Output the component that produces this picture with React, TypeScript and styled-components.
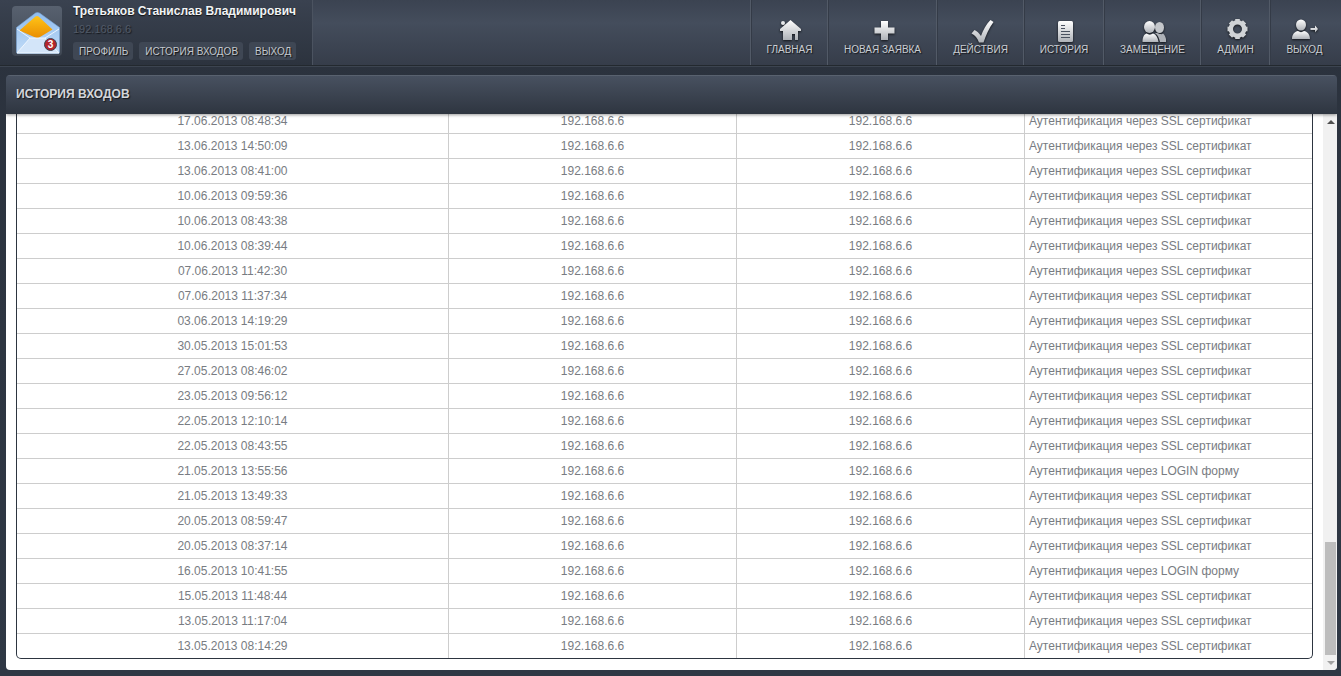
import React from "react";
import styled, { createGlobalStyle } from "styled-components";

const Global = createGlobalStyle`
  html, body { margin: 0; padding: 0; height: 100%; overflow: hidden; background: #2c3440; }
  #root { height: 100%; }
  * { box-sizing: border-box; }
`;

const Page = styled.div`
  width: 1341px;
  height: 676px;
  display: flex;
  flex-direction: column;
  font-family: "Liberation Sans", Arial, sans-serif;
  background: linear-gradient(#2b323d, #2f3845);
  overflow: hidden;
`;

const TopBar = styled.header`
  height: 66px;
  flex: none;
  display: flex;
  justify-content: space-between;
  background: linear-gradient(#3b4351, #444d5c 35%, #363d4a);
  border-bottom: 1px solid #23292f;
  box-shadow: 0 1px 0 #3c4450;
`;

const UserBox = styled.div`
  width: 313px;
  height: 65px;
  display: flex;
  padding: 6px 0 0 12px;
  background: linear-gradient(#3a4250, #2c333e);
  border-right: 1px solid #4b5360;
`;

const Avatar = styled.div`
  width: 50px;
  height: 50px;
  padding: 6px 0 0 4px;
  border-radius: 4px;
  background: linear-gradient(#58616f, #3f4753);
  flex: none;
`;

const UserInfo = styled.div`
  margin-left: 11px;
  display: flex;
  flex-direction: column;
`;

const UserName = styled.div`
  font-size: 12px;
  line-height: 14px;
  margin-top: -2px;
  font-weight: 700;
  color: #f1f3f5;
  text-shadow: 0 1px 1px #111;
  white-space: nowrap;
`;

const UserIp = styled.div`
  font-size: 11px;
  line-height: 13px;
  margin-top: 5px;
  color: #525a67;
  text-shadow: 1px 1px 1px #15181d;
`;

const UserLinks = styled.div`
  display: flex;
  gap: 6px;
  margin-top: 6px;
`;

const UserLink = styled.span`
  height: 18px;
  padding: 0 5px 0 6px;
  border-radius: 3px;
  display: flex;
  align-items: center;
  font-size: 10px;
  color: #c3c8ce;
  background: #3f4754;
  text-shadow: 1px 1px 1px #111;
  white-space: nowrap;
`;

const Nav = styled.nav`
  display: flex;
`;

const NavItem = styled.div<{ $w: number }>`
  width: ${(p) => p.$w}px;
  height: 65px;
  border-left: 1px solid #525a67;
  box-shadow: inset 1px 0 0 #343b47;
  display: flex;
  flex-direction: column;
  align-items: center;
  padding: 18px 0 0 1px;
  &:last-child {
    padding-right: 3px;
  }
`;

const NavIcon = styled.svg`
  width: 26px;
  height: 26px;
  flex: none;
  filter: drop-shadow(0 1px 1px rgba(0, 0, 0, 0.7));
`;

const NavLabel = styled.span`
  font-size: 10px;
  line-height: 12px;
  color: #c9cdd2;
  text-shadow: 1px 1px 1px #15181d;
  white-space: nowrap;
`;

const Panel = styled.main`
  margin: 9px 4px 6px 6px;
  flex: 1;
  min-height: 0;
  display: flex;
  flex-direction: column;
  border-radius: 4px;
  overflow: hidden;
`;

const PanelHead = styled.div`
  height: 39px;
  flex: none;
  padding: 0 0 2px 10px;
  display: flex;
  align-items: center;
  background: linear-gradient(#485160, #2e3540);
  border-top: 1px solid #59626f;
  font-size: 12px;
  font-weight: 700;
  color: #d3d6da;
  text-shadow: 1px 1px 1px #15181d;
  box-shadow: 0 1px 3px rgba(0, 0, 0, 0.4);
  position: relative;
`;

const PanelBody = styled.div`
  flex: 1;
  min-height: 0;
  display: flex;
  background: #fff;
`;

const TableWrap = styled.div`
  flex: 1;
  min-width: 0;
  display: flex;
  flex-direction: column;
  justify-content: flex-end;
  overflow: hidden;
  padding: 0 10px 11px 10px;
`;

const Table = styled.div`
  flex: none;
  border-left: 1px solid #2d3540;
  border-right: 1px solid #2d3540;
  border-bottom: 1px solid #2d3540;
  border-radius: 0 0 5px 5px;
`;

const Row = styled.div`
  display: grid;
  grid-template-columns: 431px 288px 288px 288px;
  height: 25px;
  font-size: 12px;
  color: #787c82;
  & + & {
    border-top: 1px solid #cdcdcd;
  }
`;

const Cell = styled.div<{ $left?: boolean }>`
  display: flex;
  align-items: center;
  justify-content: ${(p) => (p.$left ? "flex-start" : "center")};
  padding-left: ${(p) => (p.$left ? "4px" : "0")};
  border-left: 1px solid #cdcdcd;
  white-space: nowrap;
  &:first-child {
    border-left: 0;
  }
`;

const ScrollBar = styled.div`
  width: 14px;
  flex: none;
  background: #f1f1f1;
  display: flex;
  flex-direction: column;
`;

const ScrollButton = styled.div`
  height: 15px;
  flex: none;
  display: flex;
  align-items: center;
  justify-content: center;
  padding-left: 2px;
`;

const Arrow = styled.div<{ $down?: boolean; $dim?: boolean }>`
  width: 0;
  height: 0;
  border-left: 4px solid transparent;
  border-right: 4px solid transparent;
  ${(p) =>
    p.$down
      ? `border-top: 4px solid ${p.$dim ? "#a3a3a3" : "#505050"};`
      : `border-bottom: 4px solid ${p.$dim ? "#a3a3a3" : "#505050"};`}
`;

const Track = styled.div`
  flex: 1;
  display: flex;
  flex-direction: column;
  justify-content: flex-end;
  padding: 0 1px 0 2px;
`;

const Thumb = styled.div`
  height: 113px;
  background: #bdbdbd;
`;

const rows: [string, string][] = [
  ["17.06.2013 08:48:34", "SSL сертификат"],
  ["13.06.2013 14:50:09", "SSL сертификат"],
  ["13.06.2013 08:41:00", "SSL сертификат"],
  ["10.06.2013 09:59:36", "SSL сертификат"],
  ["10.06.2013 08:43:38", "SSL сертификат"],
  ["10.06.2013 08:39:44", "SSL сертификат"],
  ["07.06.2013 11:42:30", "SSL сертификат"],
  ["07.06.2013 11:37:34", "SSL сертификат"],
  ["03.06.2013 14:19:29", "SSL сертификат"],
  ["30.05.2013 15:01:53", "SSL сертификат"],
  ["27.05.2013 08:46:02", "SSL сертификат"],
  ["23.05.2013 09:56:12", "SSL сертификат"],
  ["22.05.2013 12:10:14", "SSL сертификат"],
  ["22.05.2013 08:43:55", "SSL сертификат"],
  ["21.05.2013 13:55:56", "LOGIN форму"],
  ["21.05.2013 13:49:33", "SSL сертификат"],
  ["20.05.2013 08:59:47", "SSL сертификат"],
  ["20.05.2013 08:37:14", "SSL сертификат"],
  ["16.05.2013 10:41:55", "LOGIN форму"],
  ["15.05.2013 11:48:44", "SSL сертификат"],
  ["13.05.2013 11:17:04", "SSL сертификат"],
  ["13.05.2013 08:14:29", "SSL сертификат"],
];

const Grad = () => (
  <defs>
    <linearGradient id="ig" x1="0" y1="0" x2="0" y2="1">
      <stop offset="0" stopColor="#ffffff" />
      <stop offset="1" stopColor="#aeb2b8" />
    </linearGradient>
  </defs>
);

const gearAngles = [0, 45, 90, 135, 180, 225, 270, 315];

const icons: Record<string, React.ReactNode> = {
  home: (
    <g>
      <circle cx="6" cy="5" r="2" fill="#e8eaec" />
      <path
        fill="url(#ig)"
        fillRule="evenodd"
        d="M13.500 2 L24 11 L24 13 L21 13 L21 22 L6 22 L6 13 L3 13 L3 11 Z M15 16 L15 22 L18 22 L18 16 Z"
      />
    </g>
  ),
  plus: <path fill="url(#ig)" d="M11 3 H18 V9.500 H24.500 V15.500 H18 V22 H11 V15.500 H4.500 V9.500 H11 Z" />,
  check: (
    <path
      fill="url(#ig)"
      d="M22.500 2 L25.500 4 C21 10 18 17 15.500 24.500 L11 24.500 C9.500 20 7 17 3.500 15.500 L6.500 12 C9 13 11 15 13 18 C15 12 18.500 6 22.500 2 Z"
    />
  ),
  doc: (
    <g>
      <rect x="7" y="3" width="15" height="21" rx="1.500" fill="url(#ig)" />
      <path
        stroke="#4a5260"
        strokeWidth="1.200"
        d="M10 7.500 H14 M10 10.500 H14 M10 13.500 H19 M10 16.500 H19 M10 19.500 H19"
      />
    </g>
  ),
  users: (
    <g>
      <ellipse cx="19.500" cy="9.500" rx="4.500" ry="5.500" fill="#c4c7cb" />
      <path d="M17 15 C21 16.500 22 16.500 23 15.500 C25 17 26 20 26.500 24 L20 24 C19 20 18 17 15 15 Z" fill="#aeb2b8" />
      <ellipse cx="9.500" cy="9" rx="5.500" ry="6" fill="url(#ig)" />
      <path d="M2.500 24 C2.500 19 4 16.500 6.500 15.500 C8.500 17 11 17 13 15.500 C16 16.500 18 19.500 18.500 24 Z" fill="url(#ig)" />
    </g>
  ),
  gear: (
    <g fill="#d0d3d6">
      <circle cx="14.500" cy="11" r="6.700" fill="none" stroke="#d0d3d6" strokeWidth="4.400" />
      {gearAngles.map((a) => (
        <rect key={a} x="12.200" y="1" width="4.600" height="4" transform={`rotate(${a} 14.500 11)`} />
      ))}
    </g>
  ),
  logout: (
    <g fill="url(#ig)">
      <ellipse cx="9" cy="7" rx="5" ry="5.500" />
      <path d="M0 21 C0 16 3 13.500 6 13 C8 14.500 10 14.500 12 13 C15 13.500 18 16 18 21 Z" />
      <path d="M18.500 10 H23 V7.500 L26 11 L23 14.500 V12 H18.500 Z" />
    </g>
  ),
};

const navItems: { label: string; w: number; icon: string }[] = [
  { label: "ГЛАВНАЯ", w: 77, icon: "home" },
  { label: "НОВАЯ ЗАЯВКА", w: 109, icon: "plus" },
  { label: "ДЕЙСТВИЯ", w: 87, icon: "check" },
  { label: "ИСТОРИЯ", w: 80, icon: "doc" },
  { label: "ЗАМЕЩЕНИЕ", w: 97, icon: "users" },
  { label: "АДМИН", w: 69, icon: "gear" },
  { label: "ВЫХОД", w: 72, icon: "logout" },
];

const MailLogo = () => (
  <svg width="44" height="42" viewBox="0 0 44 42">
    <defs>
      <linearGradient id="env" x1="0" y1="0" x2="0" y2="1">
        <stop offset="0" stopColor="#8fbcee" />
        <stop offset="1" stopColor="#c2dcf7" />
      </linearGradient>
      <linearGradient id="let" x1="0" y1="0" x2="0" y2="1">
        <stop offset="0" stopColor="#ffc418" />
        <stop offset="1" stopColor="#e98c00" />
      </linearGradient>
    </defs>
    <path
      d="M0.500 15.500 L19.500 1 Q21.500 0 23.500 1 L43.500 15.500 V40 Q43.500 41.500 42 41.500 H2 Q0.500 41.500 0.500 40 Z"
      fill="url(#env)"
      stroke="#7ba6d6"
      strokeWidth="0.600"
    />
    <path d="M3.500 18.500 L19.500 4.500 Q21 3.500 22.500 4.500 L36.500 17.500 L21.500 26.500 Z" fill="url(#let)" />
    <path d="M1 41 L14 26 H29 L43 41 Z" fill="#d3e5f9" stroke="#f4f9ff" strokeWidth="0.900" />
    <path d="M1 17 L14 26 M43 17 L29 26" stroke="#f4f9ff" strokeWidth="0.900" />
    <circle cx="34.500" cy="32.500" r="6" fill="#b3262c" stroke="#3d4450" strokeWidth="1" />
    <text x="34.500" y="36" textAnchor="middle" fontSize="10" fontWeight="700" fontFamily="Liberation Sans, sans-serif" fill="#fff">
      3
    </text>
  </svg>
);

export default function App() {
  return (
    <Page>
      <Global />
      <TopBar>
        <UserBox>
          <Avatar>
            <MailLogo />
          </Avatar>
          <UserInfo>
            <UserName>Третьяков Станислав Владимирович</UserName>
            <UserIp>192.168.6.6</UserIp>
            <UserLinks>
              <UserLink>ПРОФИЛЬ</UserLink>
              <UserLink>ИСТОРИЯ ВХОДОВ</UserLink>
              <UserLink>ВЫХОД</UserLink>
            </UserLinks>
          </UserInfo>
        </UserBox>
        <Nav>
          {navItems.map((n) => (
            <NavItem key={n.label} $w={n.w}>
              <NavIcon viewBox="0 0 26 26">
                <Grad />
                {icons[n.icon]}
              </NavIcon>
              <NavLabel>{n.label}</NavLabel>
            </NavItem>
          ))}
        </Nav>
      </TopBar>
      <Panel>
        <PanelHead>ИСТОРИЯ ВХОДОВ</PanelHead>
        <PanelBody>
          <TableWrap>
            <Table>
              {rows.map(([date, method]) => (
                <Row key={date}>
                  <Cell>{date}</Cell>
                  <Cell>192.168.6.6</Cell>
                  <Cell>192.168.6.6</Cell>
                  <Cell $left>Аутентификация через {method}</Cell>
                </Row>
              ))}
            </Table>
          </TableWrap>
          <ScrollBar>
            <ScrollButton>
              <Arrow />
            </ScrollButton>
            <Track>
              <Thumb />
            </Track>
            <ScrollButton>
              <Arrow $down $dim />
            </ScrollButton>
          </ScrollBar>
        </PanelBody>
      </Panel>
    </Page>
  );
}
